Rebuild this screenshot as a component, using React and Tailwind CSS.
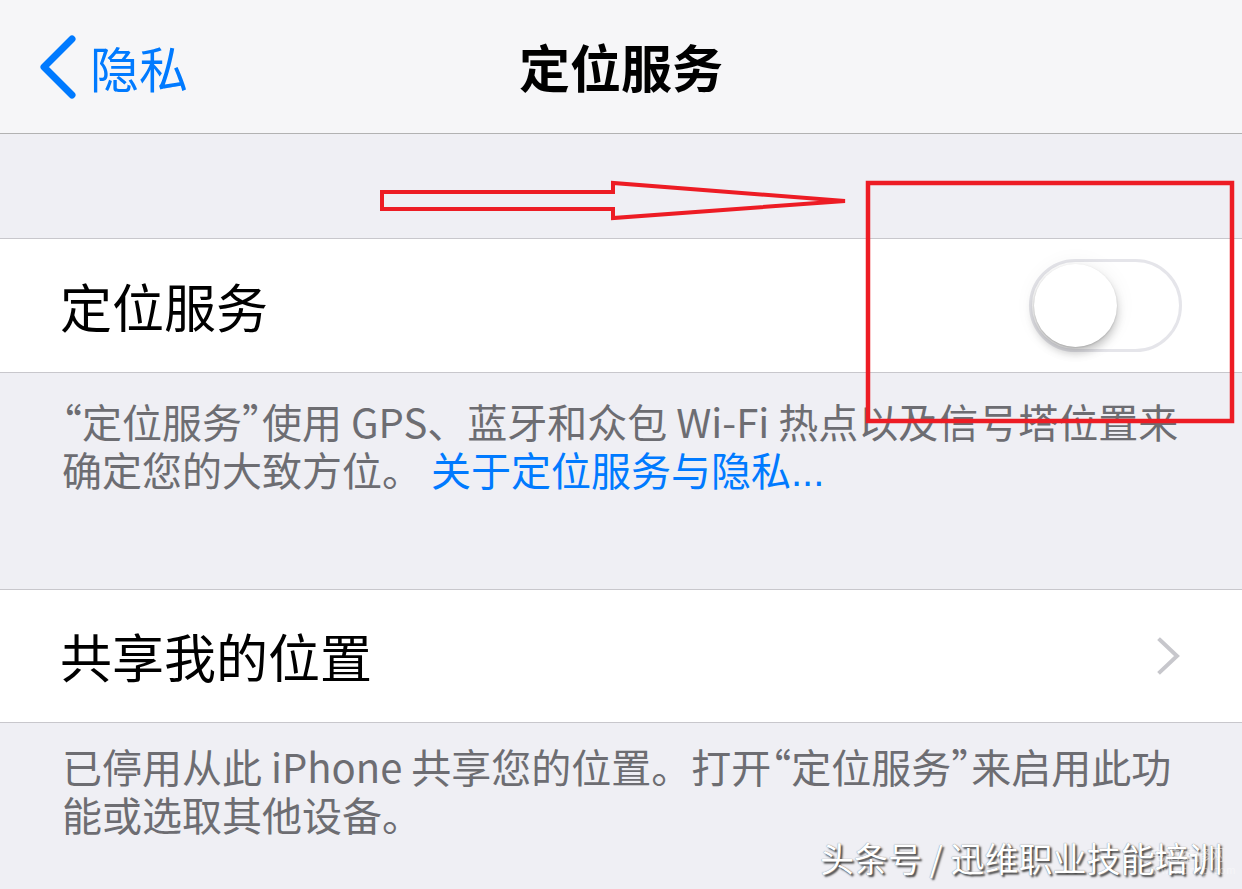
import React from "react";

const font = { fontFamily: '"Noto Sans CJK SC", "Noto Sans", sans-serif' };

function Toggle() {
  return (
    <div className="relative w-[153px] h-[93px] rounded-full border-[3px] border-[#e5e5ea] bg-white">
      <div className="absolute left-[2px] top-[2px] w-[83px] h-[83px] rounded-full bg-white shadow-[0_6px_10px_rgba(0,0,0,0.22),0_1px_2px_rgba(0,0,0,0.15),0_0_22px_rgba(0,0,0,0.06)]" />
    </div>
  );
}

function LQ() {
  return <span className="ml-[-20px]">“</span>;
}
function RQ() {
  return <span className="mr-[-20px]">”</span>;
}

export default function App() {
  return (
    <div
      className="relative w-[1242px] h-[889px] overflow-hidden bg-[#efeff4]"
      style={font}
    >
      {/* Nav bar */}
      <div className="h-[134px] bg-[#f6f6f8] border-b border-[#b2b2b2] grid grid-cols-[1fr_auto_1fr] items-center">
        <div className="flex items-center pl-[38px] gap-[12px] text-[#007aff]">
          <svg width="40" height="64" viewBox="0 0 40 64">
            <path
              d="M34 4 L6 32 L34 60"
              fill="none"
              stroke="#007aff"
              strokeWidth="7"
              strokeLinecap="round"
              strokeLinejoin="round"
            />
          </svg>
          <span className="text-[49px] leading-none">隐私</span>
        </div>
        <div className="text-[51px] leading-none text-black font-semibold">定位服务</div>
        <div />
      </div>

      {/* Gap */}
      <div className="h-[104px]" />

      {/* Row 1 */}
      <div className="h-[135px] bg-white border-y border-[#c8c7cc] flex items-center justify-between pl-[60px] pr-[60px]">
        <span className="text-[52px] leading-none text-black">定位服务</span>
        <Toggle />
      </div>

      {/* Footer 1 */}
      <div className="h-[216px] pl-[62px] pt-[24px] text-[40px] leading-[48px] text-[#6d6d72] whitespace-nowrap">
        <LQ />定位服务<RQ />使用 GPS、蓝牙和众包 Wi-Fi 热点以及信号塔位置来
        <br />
        确定您的大致方位。{" "}
        <span className="text-[#007aff]">
          关于定位服务与隐私<span className="font-['Liberation_Sans']">...</span>
        </span>
      </div>

      {/* Row 2 */}
      <div className="h-[134px] bg-white border-y border-[#c8c7cc] flex items-center justify-between pl-[60px] pr-[61px]">
        <span className="text-[52px] leading-none text-black">共享我的位置</span>
        <svg width="24" height="38" viewBox="0 0 24 38">
          <path
            d="M3 3 L20 19 L3 35"
            fill="none"
            stroke="#c7c7cc"
            strokeWidth="4"
            strokeLinecap="square"
            strokeLinejoin="miter"
          />
        </svg>
      </div>

      {/* Footer 2 */}
      <div className="pl-[62px] pt-[19px] text-[40px] leading-[48px] text-[#6d6d72] whitespace-nowrap">
        已停用从此 iPhone 共享您的位置。打开<LQ />定位服务<RQ />来启用此功
        <br />
        能或选取其他设备。
      </div>

      {/* Annotation overlay */}
      <svg
        className="absolute inset-0 pointer-events-none"
        width="1242"
        height="889"
        viewBox="0 0 1242 889"
      >
        <polygon
          points="382,192 613,192 613,183 845,201 613,218 613,209 382,209"
          fill="none"
          stroke="#ed1c24"
          strokeWidth="4"
          strokeLinejoin="miter"
        />
        <rect
          x="868"
          y="183"
          width="364"
          height="238"
          fill="none"
          stroke="#ed1c24"
          strokeWidth="4.5"
        />
      </svg>

      {/* Watermark */}
      <div className="absolute left-[820px] top-[836px] text-[34px] leading-[44px] text-white whitespace-nowrap [text-shadow:2px_2px_2px_#444,0_0_1px_#666]">
        头条号 / 迅维职业技能培训
      </div>
      <div className="absolute left-[1150px] top-[846px] text-[15px] leading-[16px] text-white/50 whitespace-nowrap">
        电脑维修网
      </div>
      <div className="absolute left-[1152px] top-[864px] text-[10px] leading-[12px] text-white/40 whitespace-nowrap tracking-[1px]">
        www.dnxp.com
      </div>
    </div>
  );
}
